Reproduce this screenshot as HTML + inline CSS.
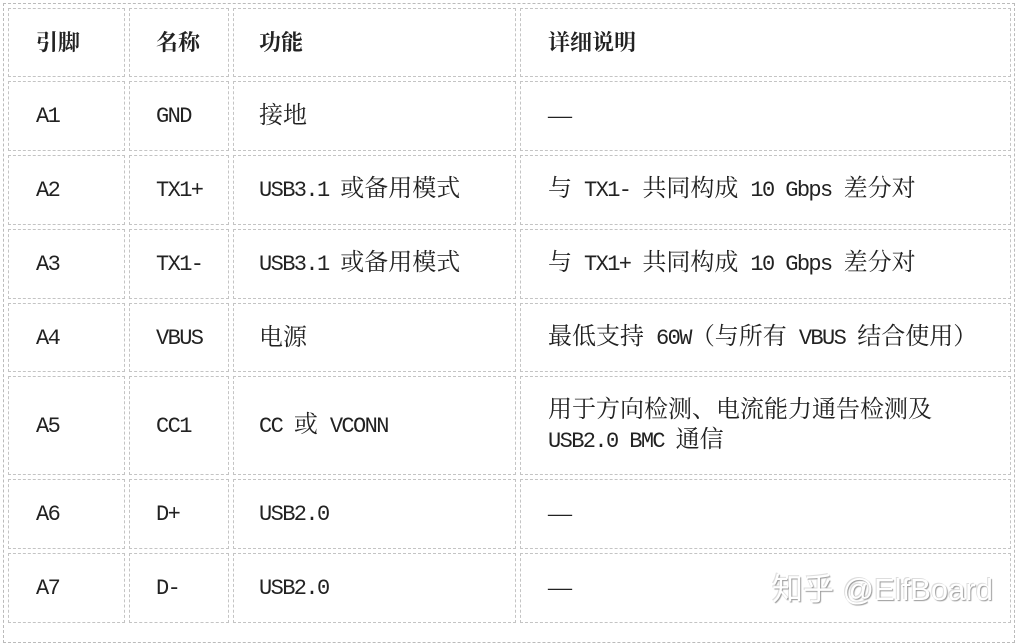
<!DOCTYPE html>
<html><head><meta charset="utf-8"><style>
body{margin:0;width:1016px;height:630px;background:#fff;overflow:hidden;position:relative;font-family:"Liberation Serif","Noto Serif CJK SC",serif;color:#222;}
.outer{position:absolute;left:3px;top:3px;width:1012px;height:640px;border:1px dashed #bbb;box-sizing:border-box;}
.c{position:absolute;border:1px dashed #c4c4c4;box-sizing:border-box;display:flex;align-items:center;font-size:24px;line-height:30px;white-space:pre;word-spacing:6px;}
.c span.l{font-family:"Liberation Mono",monospace;font-size:22px;letter-spacing:-1.6px;word-spacing:0;}
.h{font-weight:bold;font-family:"Noto Serif CJK SC",serif;font-size:22px;}
.wm{position:absolute;left:772px;top:564px;font-family:"Liberation Sans","Noto Sans CJK SC",sans-serif;font-size:31px;color:#fff;text-shadow:1px 1px 1px #999,-1px -1px 0 #ddd;}
</style></head><body>
<div class="outer"></div>
<div id="t"></div>
<div class="wm">知乎 @ElfBoard</div>
<script>
var cols=[[8,117,27],[129,100,26],[233,283,25],[520,491,27]];
var rows=[[8,69],[81,70],[155,70],[229,70],[303,69],[376,99],[479,70],[553,70]];
var L=function(s){return '<span class="l">'+s+'</span>';};
var data=[
['<b class="h">引脚</b>','<b class="h">名称</b>','<b class="h">功能</b>','<b class="h">详细说明</b>'],
[L('A1'),L('GND'),'接地','—'],
[L('A2'),L('TX1+'),L('USB3.1 ')+'或备用模式','与 '+L('TX1-')+' 共同构成 '+L('10 Gbps')+' 差分对'],
[L('A3'),L('TX1-'),L('USB3.1 ')+'或备用模式','与 '+L('TX1+')+' 共同构成 '+L('10 Gbps')+' 差分对'],
[L('A4'),L('VBUS'),'电源','最低支持 '+L('60W')+'（与所有 '+L('VBUS')+' 结合使用）'],
[L('A5'),L('CC1'),L('CC ')+'或 '+L('VCONN'),'用于方向检测、电流能力通告检测及<br>'+L('USB2.0 BMC ')+'通信'],
[L('A6'),L('D+'),L('USB2.0'),'—'],
[L('A7'),L('D-'),L('USB2.0'),'—']];
var h='';
rows.forEach(function(r,i){cols.forEach(function(c,j){
h+='<div class="c" style="left:'+c[0]+'px;top:'+r[0]+'px;width:'+c[1]+'px;height:'+r[1]+'px;padding-left:'+c[2]+'px"><div>'+data[i][j]+'</div></div>';});});
document.getElementById('t').innerHTML=h;
</script>
</body></html>
